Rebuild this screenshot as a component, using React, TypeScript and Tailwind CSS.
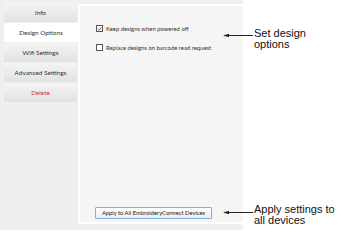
import React from "react";

const ui = { fontFamily: 'Lato, "Open Sans", sans-serif' };
const ann = { fontFamily: '"Liberation Sans", Arial, sans-serif' };

function Tab({ label, active, red }: { label: string; active?: boolean; red?: boolean }) {
  return (
    <div
      className={
        "h-[19px] flex items-center justify-center text-[6.4px] " +
        (active
          ? "bg-white w-[74px]"
          : "bg-gradient-to-b from-[#f4f4f4] to-[#e2e2e2] w-[73px]") +
        (red ? " text-[#e0303a]" : " text-[#333]")
      }
      style={ui}
    >
      {label}
    </div>
  );
}

function Check({ checked, label }: { checked?: boolean; label: string }) {
  return (
    <div className="flex items-center gap-[3px]">
      <div className="w-[7px] h-[7px] border border-[#555] bg-white flex items-center justify-center">
        {checked && (
          <svg width="6" height="6" viewBox="0 0 6 6">
            <path d="M0.8 3 L2.4 4.6 L5.3 1.2" stroke="#333" strokeWidth="0.9" fill="none" />
          </svg>
        )}
      </div>
      <span className="text-[5.9px] text-[#333] leading-none" style={ui}>
        {label}
      </span>
    </div>
  );
}

function Arrow() {
  return (
    <svg width="30" height="5" viewBox="0 0 30 5" className="shrink-0">
      <path d="M0 2.5 L6 0.8 L6 4.2 Z" fill="#222" />
      <line x1="4" y1="2.5" x2="30" y2="2.5" stroke="#222" strokeWidth="1" />
    </svg>
  );
}

export default function App() {
  return (
    <div className="w-[347px] h-[245px] bg-white flex overflow-hidden">
      <div className="w-[243px] h-[230px] bg-[#efefef] flex pl-[4px] pt-[3px]">
        <div className="flex flex-col gap-[1px] w-[74px]">
          <Tab label="Info" />
          <Tab label="Design Options" active />
          <Tab label="Wifi Settings" />
          <Tab label="Advanced Settings" />
          <Tab label="Delete" red />
        </div>
        <div className="flex-1 mt-[1px] mb-[6px] border-2 border-white border-r-0 bg-[#f5f5f5] flex flex-col pl-[16px] pt-[19px] pb-[3px]">
          <div className="flex flex-col gap-[12px]">
            <Check checked label="Keep designs when powered off" />
            <Check label="Replace designs on barcode read request" />
          </div>
          <div className="mt-auto -ml-[1px]">
            <div
              className="w-[117px] h-[12px] border border-[#7fb2e0] rounded-[1px] bg-gradient-to-b from-white to-[#eeeeee] flex items-center justify-center text-[5.8px] text-[#222]"
              style={ui}
            >
              Apply to All EmbroideryConnect Devices
            </div>
          </div>
        </div>
      </div>
      <div className="flex-1 flex flex-col">
        <div className="flex items-start mt-[28px] -ml-[20px]">
          <div className="mt-[5px]">
            <Arrow />
          </div>
          <div className="text-[11px] leading-[11px] text-[#111] ml-[1px]" style={ann}>
            Set design
            <br />
            options
          </div>
        </div>
        <div className="flex items-start mt-[154px] -ml-[20px]">
          <div className="mt-[6px]">
            <Arrow />
          </div>
          <div className="text-[11px] leading-[11px] text-[#111] ml-[1px]" style={ann}>
            Apply settings to
            <br />
            all devices
          </div>
        </div>
      </div>
    </div>
  );
}
